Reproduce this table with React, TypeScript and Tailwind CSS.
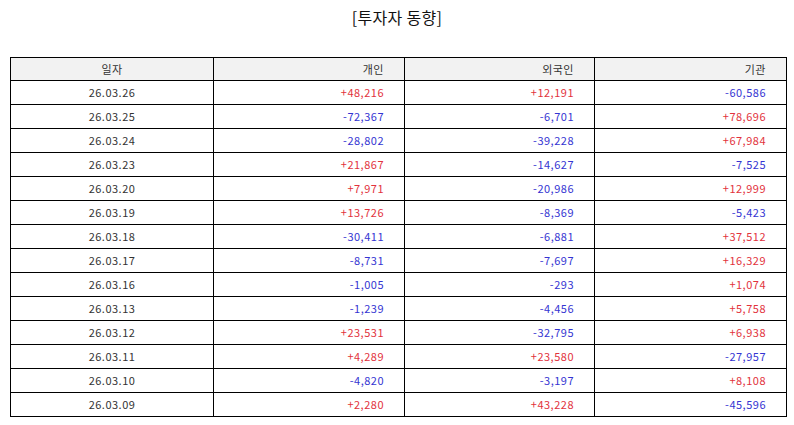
import React from 'react';

type Row = { date: string; indiv: string; foreign: string; inst: string };

const rows: Row[] = [
  { date: '26.03.26', indiv: '+48,216', foreign: '+12,191', inst: '-60,586' },
  { date: '26.03.25', indiv: '-72,367', foreign: '-6,701', inst: '+78,696' },
  { date: '26.03.24', indiv: '-28,802', foreign: '-39,228', inst: '+67,984' },
  { date: '26.03.23', indiv: '+21,867', foreign: '-14,627', inst: '-7,525' },
  { date: '26.03.20', indiv: '+7,971', foreign: '-20,986', inst: '+12,999' },
  { date: '26.03.19', indiv: '+13,726', foreign: '-8,369', inst: '-5,423' },
  { date: '26.03.18', indiv: '-30,411', foreign: '-6,881', inst: '+37,512' },
  { date: '26.03.17', indiv: '-8,731', foreign: '-7,697', inst: '+16,329' },
  { date: '26.03.16', indiv: '-1,005', foreign: '-293', inst: '+1,074' },
  { date: '26.03.13', indiv: '-1,239', foreign: '-4,456', inst: '+5,758' },
  { date: '26.03.12', indiv: '+23,531', foreign: '-32,795', inst: '+6,938' },
  { date: '26.03.11', indiv: '+4,289', foreign: '+23,580', inst: '-27,957' },
  { date: '26.03.10', indiv: '-4,820', foreign: '-3,197', inst: '+8,108' },
  { date: '26.03.09', indiv: '+2,280', foreign: '+43,228', inst: '-45,596' },
];

const Num = ({ v }: { v: string }) => (
  <td
    className={
      'border border-black text-right pr-5 ' +
      (v.startsWith('+') ? 'text-[#e2323c]' : 'text-[#3434d2]')
    }
  >
    {v}
  </td>
);

const App: React.FC = () => {
  return (
    <div
      className="w-[794px] h-[425px] bg-white text-[#333] overflow-hidden"
      style={{ fontFamily: '"Noto Sans CJK KR", "Noto Sans", sans-serif' }}
    >
      {/* title */}
      <h1 className="text-center text-[16px] leading-[20px] pt-[7px] tracking-[0.3px] text-[#111]">[투자자 동향]</h1>

      <table className="mt-[30px] ml-[10px] w-[776px] border-collapse table-fixed text-[11px] tracking-[0.5px]">
        <colgroup>
          <col className="w-[203px]" />
          <col className="w-[191px]" />
          <col className="w-[190px]" />
          <col className="w-[192px]" />
        </colgroup>
        <thead>
          <tr className="h-[23px] bg-[#f2f2f2]">
            <th className="border border-black font-normal text-center">일자</th>
            <th className="border border-black font-normal text-right pr-5">개인</th>
            <th className="border border-black font-normal text-right pr-5">외국인</th>
            <th className="border border-black font-normal text-right pr-5">기관</th>
          </tr>
        </thead>
        <tbody>
          {rows.map((r) => (
            <tr key={r.date} className="h-[24px]">
              <td className="border border-black text-center">{r.date}</td>
              <Num v={r.indiv} />
              <Num v={r.foreign} />
              <Num v={r.inst} />
            </tr>
          ))}
        </tbody>
      </table>
    </div>
  );
};

export default App;
